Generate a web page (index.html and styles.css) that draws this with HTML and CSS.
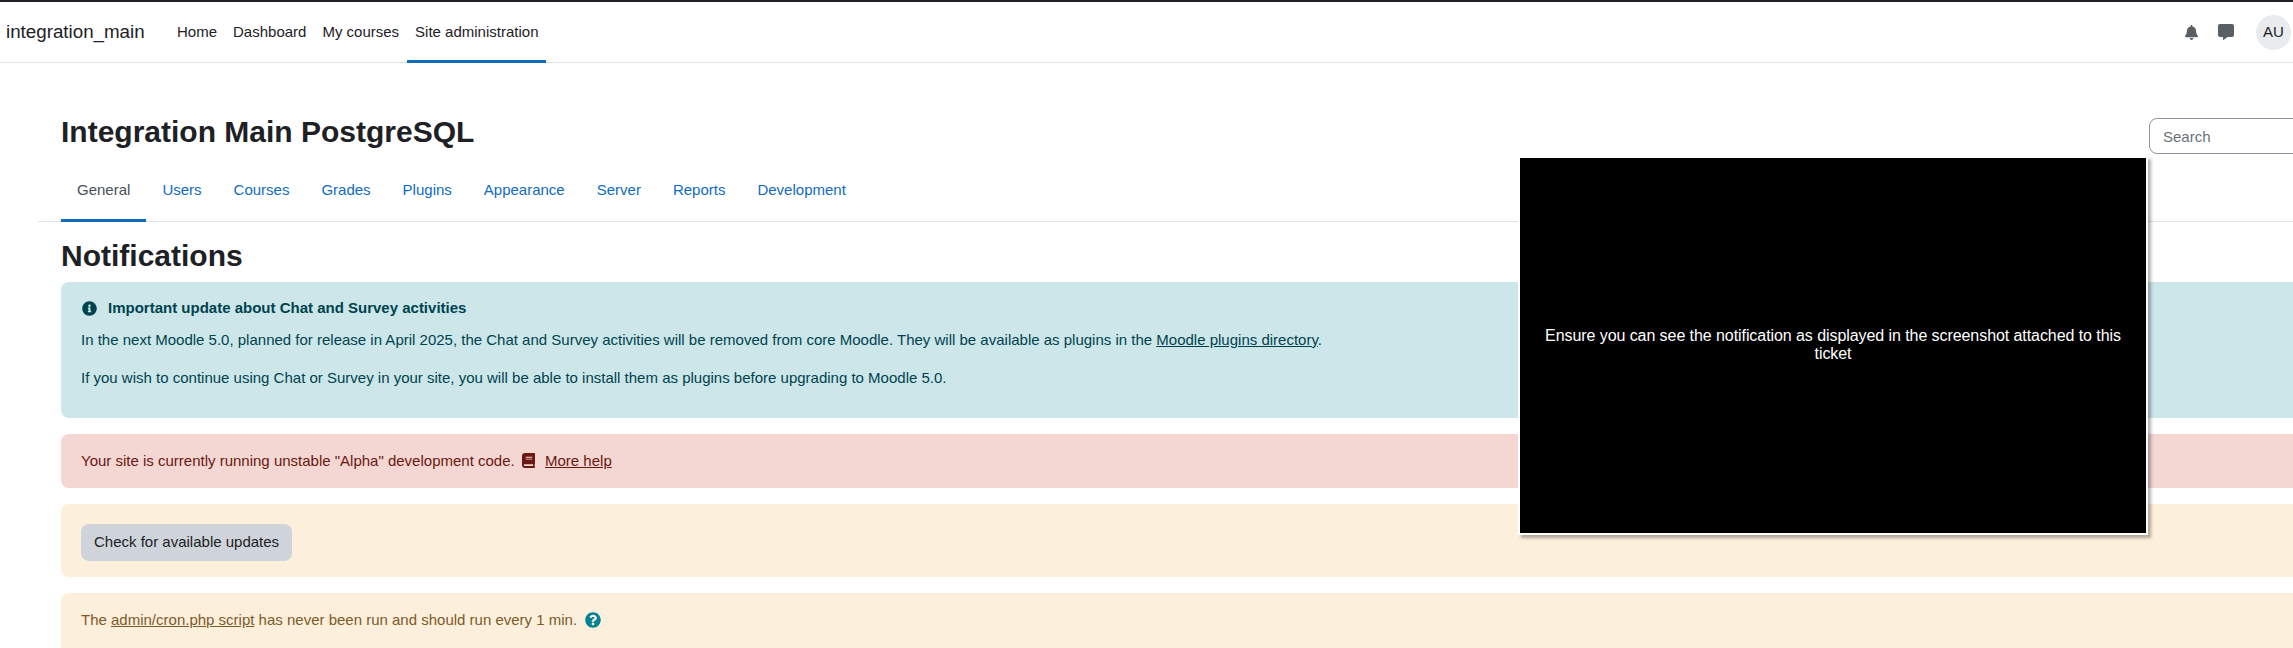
FILE: index.html
```html
<!DOCTYPE html>
<html lang="en">
<head>
<meta charset="utf-8">
<title>Integration Main PostgreSQL</title>
<link rel="stylesheet" href="styles.css">
</head>
<body>
<header class="navbar">
  <a class="brand" href="#">integration_main</a>
  <nav class="primary">
    <a href="#">Home</a>
    <a href="#">Dashboard</a>
    <a href="#">My courses</a>
    <a class="active" href="#">Site administration</a>
  </nav>
  <div class="usernav">
    <svg class="ico-bell" viewBox="0 0 448 512"><path d="M224 512c35.32 0 63.97-28.65 63.97-64H160.03c0 35.35 28.65 64 63.97 64zm215.39-149.71c-19.32-20.76-55.47-51.99-55.47-154.29 0-77.7-54.48-139.9-127.94-155.16V32c0-17.67-14.32-32-31.98-32s-31.98 14.33-31.98 32v20.84C118.56 68.1 64.08 130.3 64.08 208c0 102.3-36.15 133.53-55.47 154.29-6 6.45-8.66 14.16-8.61 21.71.11 16.4 12.98 32 32.1 32h383.8c19.12 0 32-15.6 32.1-32 .05-7.55-2.61-15.27-8.61-21.71z"/></svg>
    <svg class="ico-msg" viewBox="0 0 512 512"><path d="M448 0H64C28.7 0 0 28.7 0 64v288c0 35.3 28.7 64 64 64h96v84c0 9.8 11.2 15.5 19.1 9.7L304 416h144c35.3 0 64-28.7 64-64V64c0-35.3-28.7-64-64-64z"/></svg>
    <span class="avatar">AU</span>
  </div>
</header>

<main class="page">
  <div class="title-row">
    <h1>Integration Main PostgreSQL</h1>
    <input class="search" type="text" placeholder="Search">
  </div>
  <nav class="tabs">
    <a class="active" href="#">General</a>
    <a href="#">Users</a>
    <a href="#">Courses</a>
    <a href="#">Grades</a>
    <a href="#">Plugins</a>
    <a href="#">Appearance</a>
    <a href="#">Server</a>
    <a href="#">Reports</a>
    <a href="#">Development</a>
  </nav>
  <section class="content">
    <h2>Notifications</h2>
    <div class="alert info">
      <div class="alert-title">
        <svg class="ico-info" viewBox="0 0 512 512"><path d="M256 8C119 8 8 119.1 8 256c0 137 111 248 248 248s248-111 248-248C504 119.1 393 8 256 8zm0 110c23.2 0 42 18.8 42 42s-18.8 42-42 42-42-18.8-42-42 18.8-42 42-42zm56 254c0 6.6-5.4 12-12 12h-88c-6.6 0-12-5.4-12-12v-24c0-6.6 5.4-12 12-12h12v-64h-12c-6.6 0-12-5.4-12-12v-24c0-6.6 5.4-12 12-12h64c6.6 0 12 5.4 12 12v100h12c6.6 0 12 5.4 12 12v24z"/></svg>
        <strong>Important update about Chat and Survey activities</strong>
      </div>
      <p>In the next Moodle 5.0, planned for release in April 2025, the Chat and Survey activities will be removed from core Moodle. They will be available as plugins in the <a href="#">Moodle plugins directory</a>.</p>
      <p>If you wish to continue using Chat or Survey in your site, you will be able to install them as plugins before upgrading to Moodle 5.0.</p>
    </div>
    <div class="alert danger">
      Your site is currently running unstable "Alpha" development code.
      <svg class="ico-book" viewBox="0 0 448 512"><path d="M448 360V24c0-13.3-10.7-24-24-24H96C43 0 0 43 0 96v320c0 53 43 96 96 96h328c13.3 0 24-10.7 24-24v-16c0-7.5-3.5-14.3-8.9-18.7-4.2-15.4-4.2-59.3 0-74.7 5.4-4.3 8.9-11.1 8.9-18.6zM128 134c0-3.3 2.7-6 6-6h212c3.3 0 6 2.7 6 6v20c0 3.3-2.7 6-6 6H134c-3.3 0-6-2.7-6-6v-20zm0 64c0-3.3 2.7-6 6-6h212c3.3 0 6 2.7 6 6v20c0 3.3-2.7 6-6 6H134c-3.3 0-6-2.7-6-6v-20zm253.4 250H96c-17.7 0-32-14.3-32-32 0-17.6 14.4-32 32-32h285.4c-1.9 17.1-1.9 46.9 0 64z"/></svg>
      <a class="help" href="#">More help</a>
    </div>
    <div class="alert warning with-button">
      <button class="btn" type="button">Check for available updates</button>
    </div>
    <div class="alert warning">
      The <a href="#">admin/cron.php script</a> has never been run and should run every 1 min.
      <svg class="ico-help" viewBox="0 0 512 512"><path d="M504 256c0 136.997-111.043 248-248 248S8 392.997 8 256C8 119.083 119.043 8 256 8s248 111.083 248 248zM262.655 90c-54.497 0-89.255 22.957-116.549 63.758-3.536 5.286-2.353 12.415 2.715 16.258l34.699 26.31c5.205 3.947 12.621 3.008 16.665-2.122 17.864-22.658 30.113-35.797 57.303-35.797 20.429 0 45.698 13.148 45.698 32.958 0 14.976-12.363 22.667-32.534 33.976C247.128 238.528 216 254.941 216 296v4c0 6.627 5.373 12 12 12h56c6.627 0 12-5.373 12-12v-1.333c0-28.462 83.186-29.647 83.186-106.667 0-58.002-60.165-102-116.531-102zM256 338c-25.365 0-46 20.635-46 46 0 25.364 20.635 46 46 46s46-20.636 46-46c0-25.365-20.635-46-46-46z"/></svg>
    </div>
  </section>
</main>

<aside class="overlay">Ensure you can see the notification as displayed in the screenshot attached to this ticket</aside>
</body>
</html>
```

FILE: styles.css
```css
* { box-sizing: border-box; }

html, body {
  margin: 0;
  height: 648px;
  overflow: hidden;
  background: #fff;
}

body {
  position: relative;
  font-family: "Liberation Sans", Arial, sans-serif;
  font-size: 15px;
  line-height: 22.5px;
  color: #1d2125;
}

a { text-decoration: none; }

/* top bar */
.navbar {
  display: flex;
  align-items: stretch;
  height: 63px;
  border-top: 2px solid #1d2125;
  border-bottom: 1px solid #dee2e6;
  padding-left: 6px;
}

.brand {
  align-self: center;
  font-size: 18.75px;
  color: #1d2125;
  width: 163px;
}

.primary { display: flex; }

.primary a {
  display: flex;
  align-items: center;
  padding: 2px 8px 0;
  color: #1d2125;
  border-bottom: 3px solid transparent;
  margin-bottom: -1px;
}

.primary a.active {
  border-bottom-color: #0f6cbf;
  padding-right: 7px;
}

.usernav {
  margin-left: auto;
  display: flex;
  align-items: center;
  padding-right: 2px;
}

.ico-bell { width: 13px; height: 15px; fill: #5a5f64; }
.ico-msg { width: 16px; height: 16px; fill: #5a5f64; margin-left: 20px; }

.avatar {
  display: flex;
  align-items: center;
  justify-content: center;
  width: 35px;
  height: 35px;
  margin-left: 22px;
  border-radius: 50%;
  background: #e9ecef;
  font-size: 15px;
}

/* page */
.page {
  width: 2400px;
  padding-left: 38px;
}

.title-row {
  display: flex;
  justify-content: space-between;
  align-items: flex-start;
  width: 2311px;
  padding: 51px 0 0 23px;
  height: 112px;
}

h1 {
  margin: 0;
  font-size: 30px;
  line-height: 36px;
  font-weight: 700;
}

.search {
  width: 200px;
  height: 36px;
  margin-top: 4px;
  padding: 0 13px;
  border: 1px solid #8f959e;
  border-radius: 8px;
  font: inherit;
  color: #1d2125;
}

.search::placeholder { color: #6a737b; opacity: 1; }

.tabs {
  display: flex;
  height: 47px;
  padding-left: 23px;
  border-bottom: 1px solid #dee2e6;
}

.tabs a {
  display: flex;
  align-items: center;
  padding: 0 16px 14px;
  color: #0f6cbf;
  border-bottom: 3px solid transparent;
  margin-bottom: -1px;
}

.tabs a.active {
  color: #495057;
  border-bottom-color: #0f6cbf;
}

.content { padding-left: 23px; }

h2 {
  margin: 0;
  padding-top: 16px;
  height: 60px;
  font-size: 30px;
  line-height: 36px;
  font-weight: 700;
}

/* alerts */
.alert {
  border: 1px solid transparent;
  border-radius: 8px;
  padding: 15px 19px;
  margin-bottom: 16px;
}

.alert p { margin: 0 0 16px; }

.alert a {
  color: inherit;
  text-decoration: underline;
}

.info { background: #cce6ea; color: #00434e; height: 136px; }
.danger { background: #f4d6d2; color: #691911; height: 54px; }
.warning { background: #fcefdc; color: #7d5a29; height: 73px; }
.with-button { padding-top: 19px; }

.alert-title {
  display: flex;
  align-items: center;
  margin-top: -1px;
  margin-bottom: 9px;
}

.alert-title strong { margin-left: 11px; }

.ico-info { width: 15px; height: 15px; fill: #00434e; margin-left: 1px; }
.ico-book { width: 13px; height: 15px; fill: currentColor; vertical-align: -2px; margin: 0 3px; }
.help { margin-left: 3px; }
.ico-help { width: 16px; height: 16px; fill: #008196; vertical-align: -3px; margin-left: 4px; }

.btn {
  display: block;
  height: 37px;
  padding: 0 13px;
  border: 0;
  border-radius: 8px;
  background: #ced4da;
  color: #1d2125;
  font: inherit;
}

/* floating note over the page */
.overlay {
  position: absolute;
  left: 1518px;
  top: 156px;
  width: 630px;
  height: 379px;
  display: flex;
  align-items: center;
  justify-content: center;
  padding: 0 20px 2px;
  border: 2px solid #fff;
  background: #000;
  color: #fff;
  font-size: 16px;
  line-height: 18px;
  letter-spacing: -0.07px;
  text-align: center;
  box-shadow: 3px 3px 3px rgba(0, 0, 0, 0.3);
}
```
